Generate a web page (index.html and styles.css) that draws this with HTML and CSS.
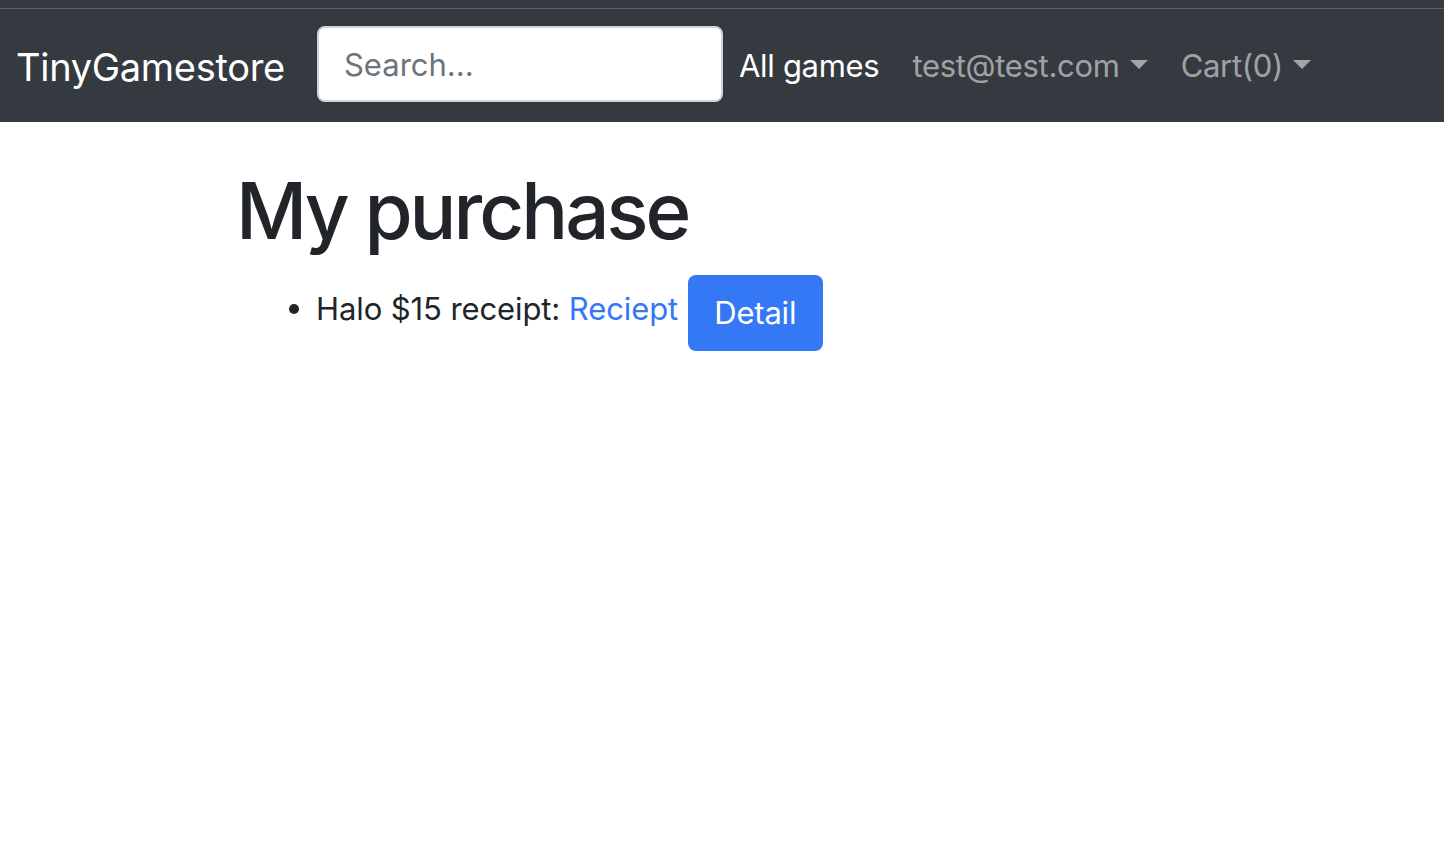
FILE: index.html
```html
<!DOCTYPE html>
<html lang="en">
<head>
<meta charset="utf-8">
<title>TinyGamestore</title>
<link rel="stylesheet" href="styles.css">
</head>
<body>
<div class="topstrip"></div>
<nav class="navbar">
  <a class="brand" href="#">TinyGamestore</a>
  <input class="search" type="text" placeholder="Search...">
  <ul class="nav">
    <li><a class="nav-link active" href="#">All games</a></li>
    <li><a class="nav-link dropdown" href="#">test@test.com</a></li>
    <li><a class="nav-link dropdown" href="#">Cart(0)</a></li>
  </ul>
</nav>
<main class="container">
  <h1 class="title">My purchase</h1>
  <ul class="purchases">
    <li>Halo $15 receipt: <a class="link" href="#">Reciept</a> <button class="btn">Detail</button></li>
  </ul>
</main>
</body>
</html>
```
FILE: styles.css
```css
* { box-sizing: border-box; }
html, body { margin: 0; padding: 0; }
body {
  font-family: Inter, "Liberation Sans", sans-serif;
  color: #212529;
  background: #fff;
  font-size: 32px;
  width: 1444px;
  height: 856px;
  overflow: hidden;
}
.topstrip {
  height: 10px;
  background: #343a40;
  border-bottom: 2px solid #5c6065;
}
.navbar {
  height: 113px;
  background: #343a40;
  display: flex;
  align-items: center;
  padding: 0 0 0 16px;
  margin-top: -1px;
}
.brand {
  color: #fff;
  text-decoration: none;
  font-size: 38px;
  letter-spacing: -0.3px;
  margin-right: 32px;
  margin-top: 2px;
}
.search {
  width: 406px;
  height: 76px;
  border: 2px solid #ced4da;
  border-radius: 8px;
  padding: 0 25px;
  font-family: inherit;
  font-size: 31px;
  color: #212529;
  background: #fff;
  margin-top: -3px;
}
.search::placeholder { color: #6c757d; }
.nav {
  list-style: none;
  display: flex;
  margin: 0 0 0 16px;
  padding: 0;
  gap: 33px;
}
.nav-link {
  color: rgba(255,255,255,0.55);
  text-decoration: none;
  font-size: 31px;
  letter-spacing: -0.3px;
  display: flex;
  align-items: center;
}
.nav-link.active { color: #fff; }
.nav-link.dropdown::after {
  content: "";
  margin-left: 10px;
  border-top: 9px solid rgba(255,255,255,0.55);
  border-left: 9px solid transparent;
  border-right: 9px solid transparent;
  margin-top: -2px;
}
.container {
  padding-left: 236px;
}
.title {
  font-size: 78px;
  font-weight: 500;
  letter-spacing: -3px;
  margin: 42px 0 17px;
  line-height: 1.2;
}
.purchases {
  margin: 0;
  padding-left: 80px;
  font-size: 31px;
  letter-spacing: -0.1px;
}
.link {
  color: #3478f6;
  text-decoration: none;
}
.btn {
  display: inline-block;
  background: #3478f6;
  color: #fff;
  border: none;
  border-radius: 8px;
  font-family: inherit;
  font-size: 31px;
  letter-spacing: -0.2px;
  padding: 0 24px;
  height: 76px;
  width: 135px;
  vertical-align: -5px;
  margin-left: 1px;
}
```
